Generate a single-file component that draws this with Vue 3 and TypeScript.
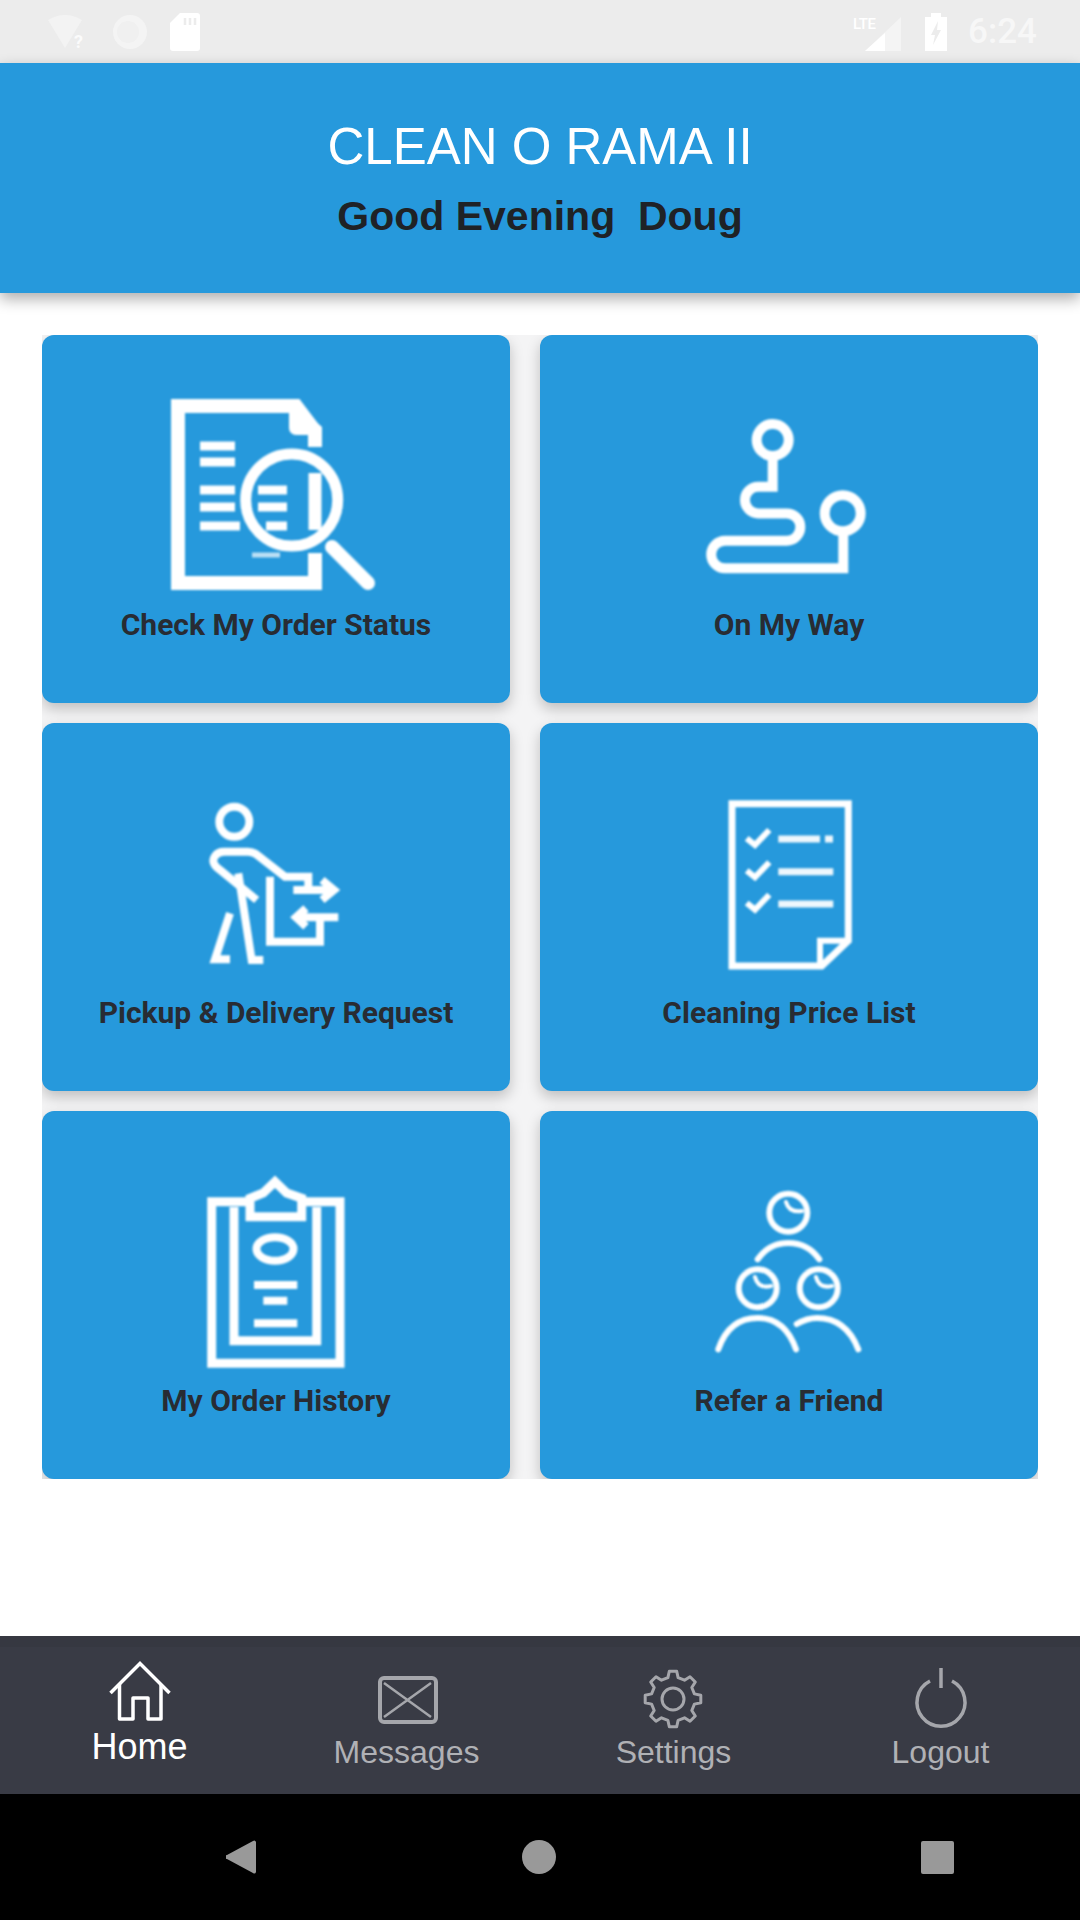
<script setup lang="ts">
const gearPath = ((): string => {
  const cx = 39, cy = 39, teeth = 8, outer = 28, root = 22
  const pts: string[] = []
  for (let i = 0; i < teeth; i++) {
    const a = (i / teeth) * Math.PI * 2 - Math.PI / 2
    const step = (Math.PI * 2) / teeth
    const offs: [number, number][] = [
      [-0.30, root], [-0.17, outer], [0.17, outer], [0.30, root],
    ]
    for (const [o, r] of offs) {
      const t = a + o * step
      pts.push(`${(cx + r * Math.cos(t)).toFixed(1)} ${(cy + r * Math.sin(t)).toFixed(1)}`)
    }
  }
  return 'M' + pts.join('L') + 'Z'
})()
</script>

<template>
  <div class="screen">
    <div class="status">
      <div class="status-left">
        <svg width="44" height="36" viewBox="0 0 44 36">
          <path d="M2 6Q19 -4 36 6L19 34Z" fill="#f3f3f3" />
          <text x="28" y="34" class="q">?</text>
        </svg>
        <svg width="36" height="36" viewBox="0 0 36 36">
          <circle cx="18" cy="18" r="17" fill="#f4f4f4" />
          <circle cx="16" cy="18" r="11" fill="#f0f0f0" />
        </svg>
        <svg width="30" height="38" viewBox="0 0 30 38">
          <path d="M10 0H27a3 3 0 0 1 3 3V35a3 3 0 0 1-3 3H3a3 3 0 0 1-3-3V10Z" fill="#fff" />
          <path d="M15 5V12M20 5V12M25 5V12" stroke="#ececec" stroke-width="2.5" />
        </svg>
      </div>
      <div class="status-right">
        <svg width="48" height="38" viewBox="0 0 48 38">
          <text x="0" y="16" class="lte">LTE</text>
          <path d="M48 4V38H12Z" fill="#f4f4f4" />
          <path d="M32 20V38H12Z" fill="#fff" />
        </svg>
        <svg width="22" height="38" viewBox="0 0 22 38">
          <path d="M6 0H16V4H22V38H0V4H6Z" fill="#fff" />
          <path d="M13 8L6 22H10L8 32L16 17H12Z" fill="#ececec" />
        </svg>
        <span class="time">6:24</span>
      </div>
    </div>

    <header class="header">
      <h1 class="title">CLEAN O RAMA II</h1>
      <p class="greeting">Good Evening&nbsp;&nbsp;Doug</p>
    </header>

    <main class="main">
      <div class="grid">
        <article class="card">
          <svg class="icon blurry" viewBox="0 0 300 220" fill="none" stroke="#fff">
            <path d="M189 62V46L170 21H52V198H189V168" stroke-width="14" stroke-linejoin="miter" />
            <path d="M163 21H172L196 42V50H170A7 7 0 0 1 163 43Z" fill="#fff" stroke="none" />
            <path d="M74 61H109M74 77H109M74 105H109M74 122H109M74 141H114M132 105H161M132 122H161M140 141H161" stroke-width="9" />
            <path d="M126 170H154" stroke-width="5" opacity=".7" />
            <path d="M189 88V145" stroke-width="13" />
            <circle cx="165.7" cy="115" r="46" stroke-width="11" />
            <path d="M206 162L242 198" stroke-width="14" stroke-linecap="round" />
          </svg>
          <span class="label">Check My Order Status</span>
        </article>

        <article class="card">
          <svg class="icon" viewBox="0 0 300 220" fill="none" stroke="#fff" stroke-width="10">
            <circle cx="133.7" cy="55" r="16" />
            <circle cx="203.7" cy="128.3" r="18" />
            <path d="M133.7 75V101.7H119.3a13.3 13.3 0 0 0 0 26.7H147.7a13.6 13.6 0 0 1 0 27.3H86a13.8 13.8 0 0 0 0 27.6H204.3V148" stroke-linejoin="miter" />
          </svg>
          <span class="label">On My Way</span>
        </article>

        <article class="card">
          <svg class="icon" viewBox="0 0 300 220" fill="none" stroke="#fff" stroke-width="8">
            <circle cx="108.3" cy="48.7" r="15" />
            <path d="M130.7 127L94 97Q84 90 89 83Q92 78.7 98 78.7H122Q126 78.7 130 81L159 103.7H182.3V117" />
            <path d="M112.3 100.3L125.7 187H137.3" />
            <path d="M104 140.3L89 186.3H104" />
            <path d="M144 103.7V168.7H194V145.3" />
            <path d="M167.3 117H208M196 107L208 117L196 127" />
            <path d="M212.3 144.3H170M180 135.3L170 144.3L180 153.7" />
          </svg>
          <span class="label">Pickup &amp; Delivery Request</span>
        </article>

        <article class="card">
          <svg class="icon" viewBox="0 0 300 220" fill="none" stroke="#fff" stroke-width="7">
            <path d="M93 30.7H209.3V167.7L182.7 193H93Z" />
            <path d="M209.3 167.7H181V193" stroke-width="6" />
            <path d="M107.7 65.3L116 72L130.3 57M107.7 97.6L116 104.3L130.3 89.3M107.7 130L116 136.7L130.3 121.7" stroke-width="6" />
            <path d="M139.3 66H181M186 66H194M139.3 98.7H194.3M139.3 131H194.3" stroke-width="7" opacity=".92" />
          </svg>
          <span class="label">Cleaning Price List</span>
        </article>

        <article class="card">
          <svg class="icon" viewBox="0 0 300 220" fill="none" stroke="#fff" stroke-width="9">
            <path d="M124 40.7H85.7V202.3H214V40.7H175.7" />
            <path d="M108 46V179.7H190.7V46" />
            <path d="M124 55.7H175.7V37.3L160.7 32L149 20.7L137.3 32L124 37.3Z" />
            <ellipse cx="149" cy="88" rx="18.5" ry="11.7" stroke-width="8" />
            <path d="M128 124H171.3M137.3 139.7H161.3M128 162.3H171.3" stroke-width="8" />
          </svg>
          <span class="label">My Order History</span>
        </article>

        <article class="card">
          <svg class="icon" viewBox="0 0 300 220" fill="none" stroke="#fff" stroke-width="6" stroke-linecap="round">
            <circle cx="149.3" cy="51.7" r="19" />
            <circle cx="118.7" cy="127.3" r="19" />
            <circle cx="179.7" cy="127.3" r="19" />
            <path d="M147 41Q150 52 163 50M116 116Q119 128 132 125M177 116Q180 128 193 125" stroke-width="4" />
            <path d="M118.7 98.3Q130 82 149.3 82Q169 82 180.3 98.3" />
            <path d="M79.3 188.3Q90 157 118.7 157Q146 157 157 188.3" />
            <path d="M157.7 163Q168 157 178 157Q207 157 219.3 188.3" />
          </svg>
          <span class="label">Refer a Friend</span>
        </article>
      </div>
    </main>

    <nav class="tabs">
      <div class="tab active">
        <svg class="tab-icon" viewBox="0 0 80 70" fill="none" stroke="#fff" stroke-width="3.5">
          <path d="M10.5 33L40 3.5L69.5 33" stroke-linejoin="miter" transform="translate(0 0)" />
          <path d="M19.5 24V59H33V38H48V59H61V24" stroke-linejoin="round" />
        </svg>
        <span class="tab-label">Home</span>
      </div>
      <div class="tab">
        <svg class="tab-icon" viewBox="0 0 80 70" fill="none" stroke="#a5a6ab" stroke-width="4">
          <rect x="13" y="18" width="56" height="44" rx="4" />
          <path d="M17 23L64 57M64 23L17 57" stroke-width="2.5" />
        </svg>
        <span class="tab-label">Messages</span>
      </div>
      <div class="tab">
        <svg class="tab-icon" viewBox="0 0 80 70" fill="none" stroke="#a5a6ab" stroke-width="3">
          <path :d="gearPath" stroke-linejoin="round" />
          <circle cx="39" cy="39" r="11" />
        </svg>
        <span class="tab-label">Settings</span>
      </div>
      <div class="tab">
        <svg class="tab-icon" viewBox="0 0 80 70" fill="none" stroke="#a5a6ab" stroke-width="3.5">
          <path d="M40 8V28" />
          <path d="M29 21A24 24 0 1 0 51 21" />
        </svg>
        <span class="tab-label">Logout</span>
      </div>
    </nav>

    <div class="sysbar">
      <svg width="30" height="34" viewBox="0 0 30 34"><path d="M30 2V32a2 2 0 0 1-3 1L1 19a2 2 0 0 1 0-4L27 1a2 2 0 0 1 3 1Z" fill="#999" /></svg>
      <svg width="34" height="34" viewBox="0 0 34 34"><circle cx="17" cy="17" r="17" fill="#999" /></svg>
      <svg width="33" height="33" viewBox="0 0 33 33"><rect width="33" height="33" rx="2" fill="#999" /></svg>
    </div>
  </div>
</template>

<style scoped>
.screen {
  width: 1080px;
  height: 1920px;
  display: flex;
  flex-direction: column;
  background: #fff;
  overflow: hidden;
  font-family: "Liberation Sans", Arial, sans-serif;
}
.status {
  height: 63px;
  flex: none;
  background: #ececec;
  display: flex;
  justify-content: space-between;
  align-items: center;
  padding: 0 43px 0 46px;
}
.status-left {
  display: flex;
  align-items: center;
  gap: 22px;
}
.status-right {
  display: flex;
  align-items: center;
  gap: 24px;
  margin-top: 0;
}
.q {
  font: 700 18px "Roboto", sans-serif;
  fill: #fbfbfb;
}
.lte {
  font: 500 15px "Roboto", sans-serif;
  fill: #fff;
  letter-spacing: -0.5px;
}
.time {
  font: 500 35px "Roboto", sans-serif;
  color: #f7f7f7;
  line-height: 40px;
  margin-left: -3px;
}
.header {
  height: 230px;
  flex: none;
  background: #2699dc;
  box-shadow: 0 6px 14px rgba(0, 0, 0, 0.32);
  position: relative;
  display: flex;
  flex-direction: column;
  align-items: center;
  padding-top: 54px;
  box-sizing: border-box;
}
.title {
  margin: 0;
  font-size: 51px;
  font-weight: 400;
  line-height: 60px;
  color: #fff;
}
.greeting {
  margin: 15px 0 0;
  font-size: 41px;
  font-weight: 700;
  line-height: 48px;
  color: #1f2226;
}
.main {
  flex: 1;
  padding: 42px 42px 0;
}
.grid {
  display: grid;
  grid-template-columns: 468px 498px;
  grid-auto-rows: 368px;
  column-gap: 30px;
  row-gap: 20px;
  background: #f4f4f5;
  overflow: hidden;
}
.card {
  background: #2699dc;
  border-radius: 12px;
  box-shadow: 0 6px 14px rgba(0, 0, 0, 0.22);
  display: flex;
  flex-direction: column;
  align-items: center;
  padding-top: 50px;
  box-sizing: border-box;
}
.icon {
  width: 300px;
  height: 220px;
  flex: none;
  filter: blur(0.8px);
}
.blurry {
  filter: blur(1.2px);
}
.label {
  font-family: "Roboto", sans-serif;
  font-weight: 700;
  font-size: 30px;
  line-height: 40px;
  color: #282c33;
}
.tabs {
  height: 158px;
  flex: none;
  box-sizing: border-box;
  background: #393b45;
  border-top: 11px solid #363841;
  display: grid;
  grid-template-columns: repeat(4, 1fr);
  padding: 13px 6px 0;
}
.tab {
  display: flex;
  flex-direction: column;
  align-items: center;
}
.tab-icon {
  width: 80px;
  height: 70px;
  flex: none;
}
.tab-label {
  margin-top: 2px;
  font-size: 32px;
  line-height: 40px;
  color: #b0b1b5;
}
.active .tab-label {
  margin-top: -3px;
  font-size: 36px;
  color: #fff;
}
.sysbar {
  height: 126px;
  flex: none;
  background: #000;
  display: grid;
  grid-template-columns: 241px 1fr 1fr;
  align-items: center;
  padding-left: 0;
  position: relative;
}
.sysbar svg:nth-child(1) { justify-self: end; margin-right: 0; transform: translateX(15px); }
.sysbar svg:nth-child(2) { justify-self: start; margin-left: 281px; }
.sysbar svg:nth-child(3) { justify-self: start; margin-left: 260px; }
</style>

<style>
html, body { margin: 0; padding: 0; background: #fff; }
</style>
